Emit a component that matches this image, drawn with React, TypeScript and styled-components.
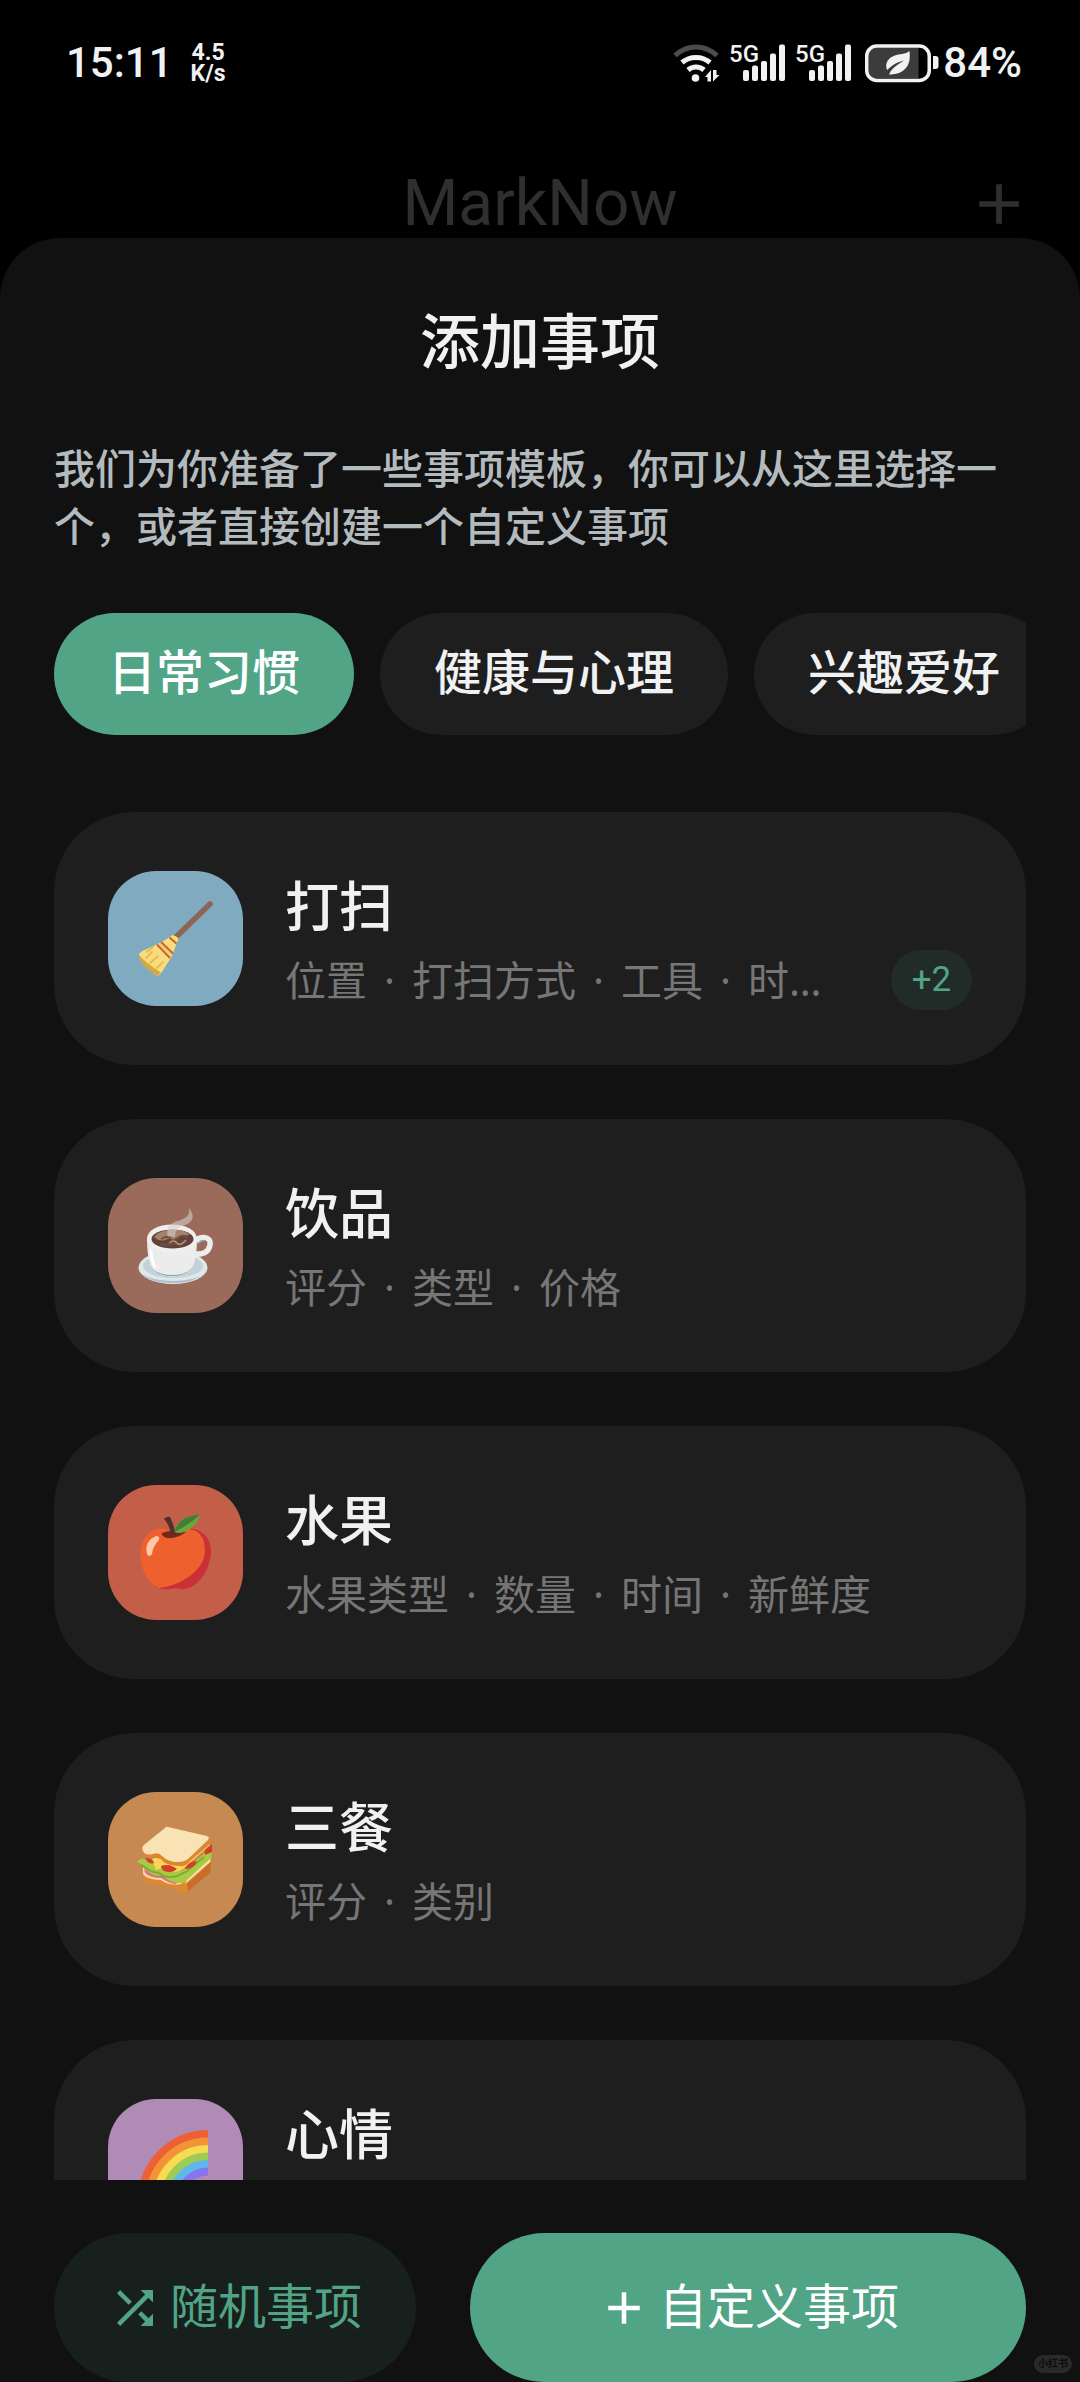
import React, { useState } from "react";
import styled, { createGlobalStyle } from "styled-components";

const color = {
  sheet: "#111111",
  card: "#1e1e1e",
  accent: "#51a486",
  accentDim: "#18201d",
  badge: "#212c29",
  text: "#f0f1f2",
  body: "#b3bbbf",
  muted: "#767676",
  faded: "#2e2f2f",
};

const GlobalStyle = createGlobalStyle`
  * { box-sizing: border-box; }
  body {
    margin: 0;
    background: #000;
    color: ${color.text};
    font-family: Roboto, "Noto Sans CJK SC", sans-serif;
  }
  button { font: inherit; color: inherit; border: 0; margin: 0; padding: 0; cursor: pointer; }
  svg { display: block; flex: none; overflow: visible; }
`;

const Screen = styled.div`
  height: 100vh;
  display: flex;
  flex-direction: column;
  overflow: hidden;
`;

/* Status bar */
const StatusBar = styled.div`
  height: 126px;
  padding: 0 58px 0 66px;
  display: flex;
  align-items: center;
  justify-content: space-between;
  font-weight: 500;
`;

const StatusGroup = styled.div<{ $gap: number }>`
  display: flex;
  align-items: center;
  gap: ${(p) => p.$gap}px;
`;

const StatusText = styled.span`
  font-size: 42px;
  line-height: 48px;
`;

const NetSpeed = styled.span`
  display: flex;
  flex-direction: column;
  align-items: center;
  font-size: 23px;
  line-height: 21px;
  font-weight: 700;
`;

/* App bar, dimmed behind the sheet */
const Toolbar = styled.header`
  height: 112px;
  padding: 0 47px;
  display: grid;
  grid-template-columns: 1fr auto 1fr;
  align-items: end;
  color: ${color.faded};
`;

const AppName = styled.h1`
  grid-column: 2;
  margin: 0;
  font-size: 64px;
  line-height: 68px;
  font-weight: 400;
`;

const IconButton = styled.button`
  justify-self: end;
  background: none;
`;

/* Sheet */
const Sheet = styled.main`
  flex: 1;
  min-height: 0;
  padding: 64px 54px 0;
  display: flex;
  flex-direction: column;
  background: ${color.sheet};
  border-radius: 60px 60px 0 0;
`;

const SheetTitle = styled.h2`
  margin: 0;
  text-align: center;
  font-size: 60px;
  line-height: 84px;
  font-weight: 500;
`;

const Intro = styled.p`
  margin: 55px 0 56px;
  font-size: 41px;
  line-height: 58px;
  font-weight: 500;
  color: ${color.body};
`;

const Chips = styled.div`
  flex: none;
  display: flex;
  gap: 26px;
  overflow-x: auto;
  scrollbar-width: none;
`;

const Chip = styled.button<{ $active: boolean }>`
  flex: none;
  height: 122px;
  padding: 0 54px;
  border-radius: 61px;
  font-size: 48px;
  line-height: 60px;
  font-weight: 500;
  background: ${(p) => (p.$active ? color.accent : color.card)};
  color: ${(p) => (p.$active ? "#ffffff" : color.text)};
`;

const List = styled.ul`
  flex: 1;
  min-height: 0;
  margin: 77px 0 0;
  padding: 0;
  list-style: none;
  display: flex;
  flex-direction: column;
  gap: 54px;
  overflow-y: auto;
  scrollbar-width: none;
`;

const Row = styled.li`
  flex: none;
`;

const Card = styled.button`
  width: 100%;
  height: 253px;
  padding: 0 54px;
  display: flex;
  align-items: center;
  gap: 42px;
  border-radius: 80px;
  background: ${color.card};
  text-align: left;
`;

const Tile = styled.span<{ $tint: string }>`
  flex: none;
  width: 135px;
  height: 135px;
  display: grid;
  place-items: center;
  border-radius: 48px;
  background: ${(p) => p.$tint};
`;

const CardBody = styled.span`
  flex: 1;
  min-width: 0;
  display: flex;
  flex-direction: column;
`;

const CardTitle = styled.span`
  font-size: 54px;
  line-height: 82px;
  font-weight: 500;
`;

const CardMeta = styled.span`
  display: flex;
  align-items: center;
  justify-content: space-between;
  gap: 42px;
`;

const Fields = styled.span`
  min-width: 0;
  overflow: hidden;
  white-space: nowrap;
  text-overflow: ellipsis;
  font-family: "Noto Sans", "Noto Sans CJK SC", sans-serif;
  font-size: 41px;
  line-height: 60px;
  color: ${color.muted};
`;

const Dot = styled.span`
  margin: 0 17px;
`;

const Badge = styled.span`
  flex: none;
  width: 81px;
  height: 60px;
  display: grid;
  place-items: center;
  border-radius: 30px;
  font-size: 35px;
  line-height: 60px;
  color: ${color.accent};
  background: ${color.badge};
`;

const Actions = styled.footer`
  flex: none;
  padding-top: 53px;
  display: flex;
  gap: 54px;
`;

const Action = styled.button<{ $primary?: boolean }>`
  flex: ${(p) => (p.$primary ? "1" : "none")};
  height: 149px;
  padding: 0 54px;
  display: flex;
  align-items: center;
  justify-content: center;
  gap: 8px;
  border-radius: 75px;
  font-size: 48px;
  line-height: 60px;
  background: ${(p) => (p.$primary ? color.accent : color.accentDim)};
  color: ${(p) => (p.$primary ? "#ffffff" : color.accent)};
`;

const Watermark = styled.span`
  position: absolute;
  right: 8px;
  bottom: 9px;
  padding: 0 4px;
  border-radius: 9px;
  font-size: 10px;
  line-height: 18px;
  font-weight: 700;
  color: #0c0c0c;
  background: #2a2a2a;
`;

/* Icons */
const AddIcon = ({ size }: { size: number }) => (
  <svg width={size} height={size} viewBox="0 0 24 24" fill="currentColor" aria-hidden="true">
    <path d="M19 13h-6v6h-2v-6H5v-2h6V5h2v6h6v2z" />
  </svg>
);

const ShuffleIcon = () => (
  <svg width="54" height="54" viewBox="0 0 24 24" fill="currentColor" aria-hidden="true">
    <path d="M10.59 9.17 5.41 4 4 5.41l5.17 5.17 1.42-1.41zM14.5 4l2.04 2.04L4 18.59 5.41 20 17.96 7.46 20 9.5V4h-5.5zm.33 9.41-1.41 1.41 3.13 3.13L14.5 20H20v-5.5l-2.04 2.04-3.13-3.13z" />
  </svg>
);

const WifiIcon = () => (
  <svg width="47" height="38" viewBox="0 0 47 38" fill="none" aria-label="Wi-Fi">
    <g strokeWidth="5">
      <path d="M2 11.5Q11.500 3 23 3T44 11.500" stroke="#4c4c4c" />
      <path d="M9 18.500Q15 13.500 23 13.500T37 18.500" stroke="#f2f2f2" />
      <path d="M15 26Q18.500 23 23 23T31 26" stroke="#f2f2f2" />
    </g>
    <circle cx="22.500" cy="34" r="3.800" fill="#f2f2f2" />
    <path d="M38 26v11.500h-3.500v-4.500H32zM40 26v11.500l6.500-6.500H43.500V26z" fill="#f2f2f2" />
  </svg>
);

const SignalIcon = () => (
  <svg width="56" height="38" viewBox="0 0 56 38" fill="#f2f2f2" aria-label="5G">
    <text x="-1" y="18" fontSize="24" fontWeight="500">5G</text>
    <rect x="13" y="26" width="6" height="11" rx="2" />
    <rect x="22" y="21.500" width="6" height="15.500" rx="2" />
    <rect x="31" y="17" width="6" height="20" rx="2" />
    <rect x="40" y="9.500" width="6" height="27.500" rx="2" />
    <rect x="49" y="0.500" width="6" height="36.500" rx="2" />
  </svg>
);

const BatteryIcon = () => (
  <svg width="74" height="38" viewBox="0 0 74 38" aria-label="Battery">
    <path d="M12 3.500h41.500v31H12q-8.500 0-8.500-8.500V12q0-8.500 8.500-8.500z" fill="#3c3c3c" />
    <rect x="1.750" y="2" width="62.500" height="34.500" rx="10" fill="none" stroke="#f2f2f2" strokeWidth="3.500" />
    <path d="M68 12h2.500q3 0 3 3v7q0 3-3 3H68z" fill="#f2f2f2" />
    <path d="M44.500 7Q46 18 41 24 35 31 24 30.500 25 27 29 23.500 34 19.500 39 16.500 30 18.500 25 23.500L22 26Q19.500 19 25 14 30 10.500 37 10 42 9.500 44.500 7z" fill="#f2f2f2" />
  </svg>
);

const Emoji = ({ children }: { children: React.ReactNode }) => (
  <svg width="76" height="76" viewBox="0 0 76 76" aria-hidden="true">
    {children}
  </svg>
);

const Broom = () => (
  <Emoji>
    <path d="M72 3 36 38" stroke="#8d6552" strokeWidth="5.500" strokeLinecap="round" />
    <path d="M34.500 34Q25 41 9 48 1 51 1 54 3 61 18.500 75q4-1 6-5L34 55q3-8 6.500-17.500-2-3-6-3.500z" fill="#fbdc7c" />
    <path d="M1 54Q9 63 23 71.500L18.500 75Q6 66 2 59z" fill="#d3a941" />
    <path d="M14 51 8 57M20 55l-8 7M25 61l-6 6M15 46l-6 5" stroke="#e3bb52" strokeWidth="1.800" strokeLinecap="round" fill="none" />
    <path d="M19 43.500 32 57M23 41l12 11.500M31.500 36.500l7 6" stroke="#c96335" strokeWidth="2" fill="none" />
    <path d="m21 42 13 13" stroke="#f2c85f" strokeWidth="1.500" />
  </Emoji>
);

const Coffee = () => (
  <Emoji>
    <ellipse cx="35" cy="59.500" rx="34.500" ry="16.500" fill="#dfe7ea" />
    <ellipse cx="35" cy="58" rx="30" ry="12" fill="#c3d2d8" />
    <path d="M4 66q9 9 31 9t31-10q-6 7-31 8Q14 73 4 66z" fill="#aebfc7" />
    <path d="M58 34q2-5 8-4.500 7 .5 6 7.500-2 10-15 9" fill="none" stroke="#eceeee" strokeWidth="5.500" />
    <path d="M60 36q2-3.500 6-3.500" fill="none" stroke="#8da6af" strokeWidth="1.500" />
    <path d="M9 31q0 20 5 29 6 8.500 20.500 8.500T54 60q5-9 5-29z" fill="#ececec" />
    <path d="M13 59q6 8 21.500 8T55 58q-5 10-20.500 10T13 59z" fill="#6ba5b2" />
    <path d="M11.500 41q0 13 5 19l2-1q-4-7-4-17z" fill="#fff" />
    <ellipse cx="34" cy="30.500" rx="25" ry="14" fill="#f0efee" />
    <ellipse cx="34.500" cy="31" rx="21" ry="9.500" fill="#62433b" />
    <path d="M16 29q4-6 16-7 14-1 20 5-10 0-17 5-4-2-8 0-5 2-11-3z" fill="#a5836c" />
    <path d="M23 31q7-4 10 0t8-2q6-3 8 1M22 36q8 2 15-1 6 3 11-2" fill="none" stroke="#74503f" strokeWidth="2" />
    <path d="M31 35q5-4 8 0t9-3" fill="none" stroke="#b59172" strokeWidth="1.500" />
    <path d="M30 28q-4-10 9-15 14-3 12-13 9 12-4 17-10 2-10 12z" fill="#d4d0ce" opacity=".58" />
  </Emoji>
);

const Apple = () => (
  <Emoji>
    <path d="M36 16q11-4 20-2 15 4 17 20 0 20-13 33-10 10-22 6-10 3-21-1z" fill="#ca3036" />
    <path d="M34 16q14-5 24 0 9 5 9 20-1 16-18 27-14 9-29 10Q4 63 2.500 42 2 25 12 17q9-6 22-1z" fill="#ef602f" />
    <path d="M24 18q10-4 24-1-9 7-19 6-6-2-5-5z" fill="#732919" />
    <path d="M26 4q3-3 6-2 4 8 5.500 17h-5Q32 10 26 4z" fill="#513029" />
    <path d="M36.500 17Q39 1 62-.5 59 12 46 17q-5 2-9.500 0z" fill="#69a83d" />
    <path d="M36.500 17Q40 1 62-.5 54 8 36.500 17z" fill="#467d35" />
    <path d="M18 21q4 0 3 4-6 6-7 14-3 4-5 0-3-13 9-18z" fill="#ffc8a4" />
  </Emoji>
);

const Sandwich = () => (
  <Emoji>
    <path d="M4 46 25 52l48-16-1 14-22 19q-3 2-9 0l-17-6q-12 0-18-4z" fill="#df892f" />
    <path d="m49 62 24-22-1 11-22 18z" fill="#c76d2b" />
    <path d="M5 45q7 8 17 9 10 5 25 5l-4 3q-12 2-20-4Q6 57 5 51z" fill="#f7d9bd" />
    <path d="M6 47q8 6 17 6 11 7 21 6l-7 3q-7-1-14-6-11 0-16-5z" fill="#d97974" />
    <path d="M-1 40q5-6 9-2l10 5 26 6 26-20 4-1-1 11-27 22q-13 1-21-7-13 1-18-10z" fill="#aaca43" />
    <path d="M4 43q7 7 17 8 6 6 18 3l9-4 18-15" fill="none" stroke="#7cac39" strokeWidth="2" />
    <path d="m49 58 23-21v3L47 62z" fill="#ffe1b7" />
    <path d="m14 37 10-3 16 5 29-20 3 4-28 25-8 2-4-7-14 5z" fill="#fbd65a" />
    <path d="M7 36q8 0 9 5-6 2-9-5zm16 8q8-3 16 3-5 5-13 2-3-2-3-5zm24 3q3-8 12-8-3 8-12 8zm20-19 7-6v8l-7 3z" fill="#d33e27" />
    <path d="M4 25q-1 8 4 10 7 0 15 2 4 7 19 7 6 1 10-5l20-17q2-6-1-8L28 25z" fill="#dc8632" />
    <path d="m30 5 39 9q3 1 1 4L50 37q-4 3-10 3-10 0-16-6-3-4-9-2-8 2-10-3-2-4 2-7L27 6q1-2 3-1z" fill="#f9e2b3" />
  </Emoji>
);

const rainbowBands = ["#ec6033", "#f29435", "#f7dc51", "#9ccb56", "#5fb8ec", "#8675ee"];

const Rainbow = () => (
  <Emoji>
    {rainbowBands.map((band, i) => {
      const r = 66 - i * 7.5;
      return (
        <path key={band} d={`M${70 - r} 71A${r} ${r} 0 0 1 70 ${71 - r}`} fill="none" stroke={band} strokeWidth="8" />
      );
    })}
  </Emoji>
);

type Item = {
  name: string;
  tint: string;
  icon: React.ReactNode;
  fields: string[];
  more?: number;
};

const items: Item[] = [
  { name: "打扫", tint: "#80aabf", icon: <Broom />, fields: ["位置", "打扫方式", "工具", "时间段"], more: 2 },
  { name: "饮品", tint: "#9a6a5b", icon: <Coffee />, fields: ["评分", "类型", "价格"] },
  { name: "水果", tint: "#c35e49", icon: <Apple />, fields: ["水果类型", "数量", "时间", "新鲜度"] },
  { name: "三餐", tint: "#c58951", icon: <Sandwich />, fields: ["评分", "类别"] },
  { name: "心情", tint: "#b08bb6", icon: <Rainbow />, fields: ["评分"] },
];

const categories = ["日常习惯", "健康与心理", "兴趣爱好"];

export default function App() {
  const [category, setCategory] = useState(categories[0]);

  return (
    <Screen>
      <GlobalStyle />
      <StatusBar>
        <StatusGroup $gap={18}>
          <StatusText>15:11</StatusText>
          <NetSpeed>
            <span>4.5</span>
            <span>K/s</span>
          </NetSpeed>
        </StatusGroup>
        <StatusGroup $gap={13}>
          <StatusGroup $gap={10}>
            <WifiIcon />
            <SignalIcon />
            <SignalIcon />
          </StatusGroup>
          <StatusGroup $gap={4}>
            <BatteryIcon />
            <StatusText>84%</StatusText>
          </StatusGroup>
        </StatusGroup>
      </StatusBar>

      <Toolbar>
        <AppName>MarkNow</AppName>
        <IconButton type="button" aria-label="添加">
          <AddIcon size={68} />
        </IconButton>
      </Toolbar>

      <Sheet>
        <SheetTitle>添加事项</SheetTitle>
        <Intro>我们为你准备了一些事项模板，你可以从这里选择一个，或者直接创建一个自定义事项</Intro>

        <Chips>
          {categories.map((c) => (
            <Chip key={c} type="button" $active={c === category} onClick={() => setCategory(c)}>
              {c}
            </Chip>
          ))}
        </Chips>

        <List>
          {items.map((item) => (
            <Row key={item.name}>
              <Card type="button">
                <Tile $tint={item.tint}>{item.icon}</Tile>
                <CardBody>
                  <CardTitle>{item.name}</CardTitle>
                  <CardMeta>
                    <Fields>
                      {item.fields.map((field, i) => (
                        <React.Fragment key={field}>
                          {i > 0 && <Dot>·</Dot>}
                          {field}
                        </React.Fragment>
                      ))}
                    </Fields>
                    {item.more && <Badge>+{item.more}</Badge>}
                  </CardMeta>
                </CardBody>
              </Card>
            </Row>
          ))}
        </List>

        <Actions>
          <Action type="button">
            <ShuffleIcon />
            随机事项
          </Action>
          <Action type="button" $primary>
            <AddIcon size={54} />
            自定义事项
          </Action>
        </Actions>
      </Sheet>
      <Watermark>小红书</Watermark>
    </Screen>
  );
}
